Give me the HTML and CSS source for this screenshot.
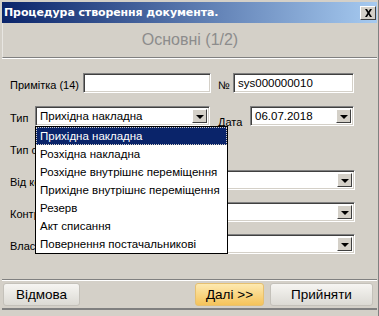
FILE: index.html
```html
<!DOCTYPE html>
<html lang="uk">
<head>
  <meta charset="UTF-8">
  <title>Процедура створення документа</title>
  <link rel="stylesheet" href="styles.css">
</head>
<body>
  <div class="window">
    <div class="titlebar">
      <span class="title">Процедура створення документа.</span>
      <span class="close">
        <svg width="9" height="8" viewBox="0 0 9 8"><path d="M1 0h2l1.5 2.5L6 0h2L5.5 4 8 8H6L4.5 5.5 3 8H1l2.5-4z" fill="#000"/></svg>
      </span>
    </div>

    <div class="page-head">Основні (1/2)</div>

    <div class="form">
      <div class="row">
        <label class="lbl w-note">Примітка (14)</label>
        <div class="field note"></div>
        <label class="lbl w-num">№</label>
        <div class="field num">sys000000010</div>
      </div>

      <div class="row">
        <label class="lbl w-type">Тип</label>
        <div class="field combo type">Прихідна накладна<span class="arrow"></span></div>
        <label class="lbl w-date">Дата</label>
        <div class="field combo date">06.07.2018<span class="arrow"></span></div>
      </div>

      <div class="row">
        <label class="lbl">Тип створення</label>
      </div>

      <div class="row">
        <label class="lbl">Від кого</label>
        <div class="field combo wide"><span class="arrow"></span></div>
      </div>

      <div class="row">
        <label class="lbl">Контрагент</label>
        <div class="field combo wide"><span class="arrow"></span></div>
      </div>

      <div class="row">
        <label class="lbl">Власник</label>
        <div class="field combo wide"><span class="arrow"></span></div>
      </div>

      <!-- open list of the "Тип" combo, drawn over the rows below it -->
      <ul class="dropdown">
        <li class="selected">Прихідна накладна</li>
        <li>Розхідна накладна</li>
        <li>Розхідне внутрішнє переміщення</li>
        <li>Прихідне внутрішнє переміщення</li>
        <li>Резерв</li>
        <li>Акт списання</li>
        <li>Повернення постачальникові</li>
      </ul>
    </div>

    <div class="footer">
      <button class="btn cancel">Відмова</button>
      <button class="btn next">Далі &gt;&gt;</button>
      <button class="btn accept">Прийняти</button>
    </div>
  </div>
</body>
</html>
```

FILE: styles.css
```css
body {
  margin: 0;
  background-color: #d4d0c8;
  font-family: "Liberation Sans", Arial, sans-serif;
  font-size: 11px;
  color: #000;
}
.window {
  position: relative;
  box-sizing: border-box;
  width: 379px;
  height: 316px;
  padding: 2px 1px 0 2px;
  border-right: 1px solid #808080;
  background-color: #d4d0c8;
  overflow: hidden;
}
.titlebar {
  display: flex;
  align-items: center;
  justify-content: space-between;
  height: 21px;
  padding: 0 1px 0 2px;
  background: linear-gradient(to right, #0a246a, #a6caf0);
}
.title {
  font-family: "DejaVu Sans", Verdana, sans-serif;
  font-weight: bold;
  font-size: 11px;
  color: #fff;
  letter-spacing: -0.1px;
}
.close {
  display: flex;
  align-items: center;
  justify-content: center;
  box-sizing: border-box;
  width: 16px;
  height: 14px;
  background-color: #d4d0c8;
  border: 1px solid;
  border-color: #fff #404040 #404040 #fff;
}
.page-head {
  height: 34px;
  line-height: 34px;
  text-align: center;
  font-size: 16px;
  color: #8c8c8c;
  border-left: 1px solid #e8e6e2;
  border-bottom: 1px solid #808080;
  box-shadow: 0 1px 0 #fff;
}
.form {
  position: relative;
  display: flex;
  flex-direction: column;
  gap: 12px;
  height: 206px;
  padding: 15px 0 0 8px;
}
.row {
  display: flex;
  align-items: flex-end;
  height: 20px;
}
.row:nth-child(2) {
  margin-top: 1px;
}
.lbl {
  padding-bottom: 2px;
}
.w-note { width: 73px; }
.w-num { width: 15px; margin-left: 7px; }
.w-type { width: 25px; }
.w-date { width: 32px; margin-left: 8px; padding-bottom: 0; margin-bottom: -2px; }
.field {
  box-sizing: border-box;
  display: flex;
  align-items: center;
  height: 20px;
  padding-left: 4px;
  background-color: #fff;
  border: 1px solid;
  border-color: #808080 #fff #fff #808080;
  box-shadow: inset 1px 1px 0 #404040, inset -1px -1px 0 #d4d0c8;
  font-size: 11.5px;
}
.note { width: 128px; }
.num { width: 121px; }
.type { width: 175px; }
.date { width: 104px; }
.wide { width: 255px; margin-left: auto; margin-right: 22px; }
.combo {
  position: relative;
}
.arrow {
  position: absolute;
  right: 2px;
  top: 2px;
  box-sizing: border-box;
  width: 15px;
  height: 14px;
  background-color: #d4d0c8;
  border: 1px solid;
  border-color: #fff #404040 #404040 #fff;
}
.arrow::after {
  content: "";
  position: absolute;
  left: 3px;
  top: 5px;
  border-left: 4px solid transparent;
  border-right: 4px solid transparent;
  border-top: 4px solid #000;
}
.dropdown {
  position: absolute;
  left: 33px;
  top: 68px;
  box-sizing: border-box;
  width: 193px;
  margin: 0;
  padding: 0;
  list-style: none;
  background-color: #fff;
  border: 1px solid #000;
  font-size: 11.5px;
}
.dropdown li {
  height: 18px;
  line-height: 18px;
  padding-left: 4px;
}
.dropdown .selected {
  box-sizing: border-box;
  background-color: #0a246a;
  color: #fff;
  outline: 1px dotted #d4d0c8;
  outline-offset: -1px;
}
.footer {
  display: flex;
  align-items: center;
  height: 28px;
  padding: 0 4px 0 1px;
  border-top: 1px solid #808080;
  box-shadow: inset 0 1px 0 #fff;
  border-bottom: 2px solid #808080;
}
.btn {
  height: 23px;
  padding: 0;
  font-family: "Liberation Sans", Arial, sans-serif;
  font-size: 13.5px;
  color: #000;
  border: 1px solid #c4c1ba;
  border-radius: 3px;
  background: linear-gradient(#f6f5f2, #dcdad4);
}
.cancel { width: 77px; }
.next {
  width: 69px;
  margin-left: auto;
  border-color: #e6c070;
  background: linear-gradient(#fde9b0, #f5c35a);
}
.accept { width: 103px; margin-left: 6px; }
```
